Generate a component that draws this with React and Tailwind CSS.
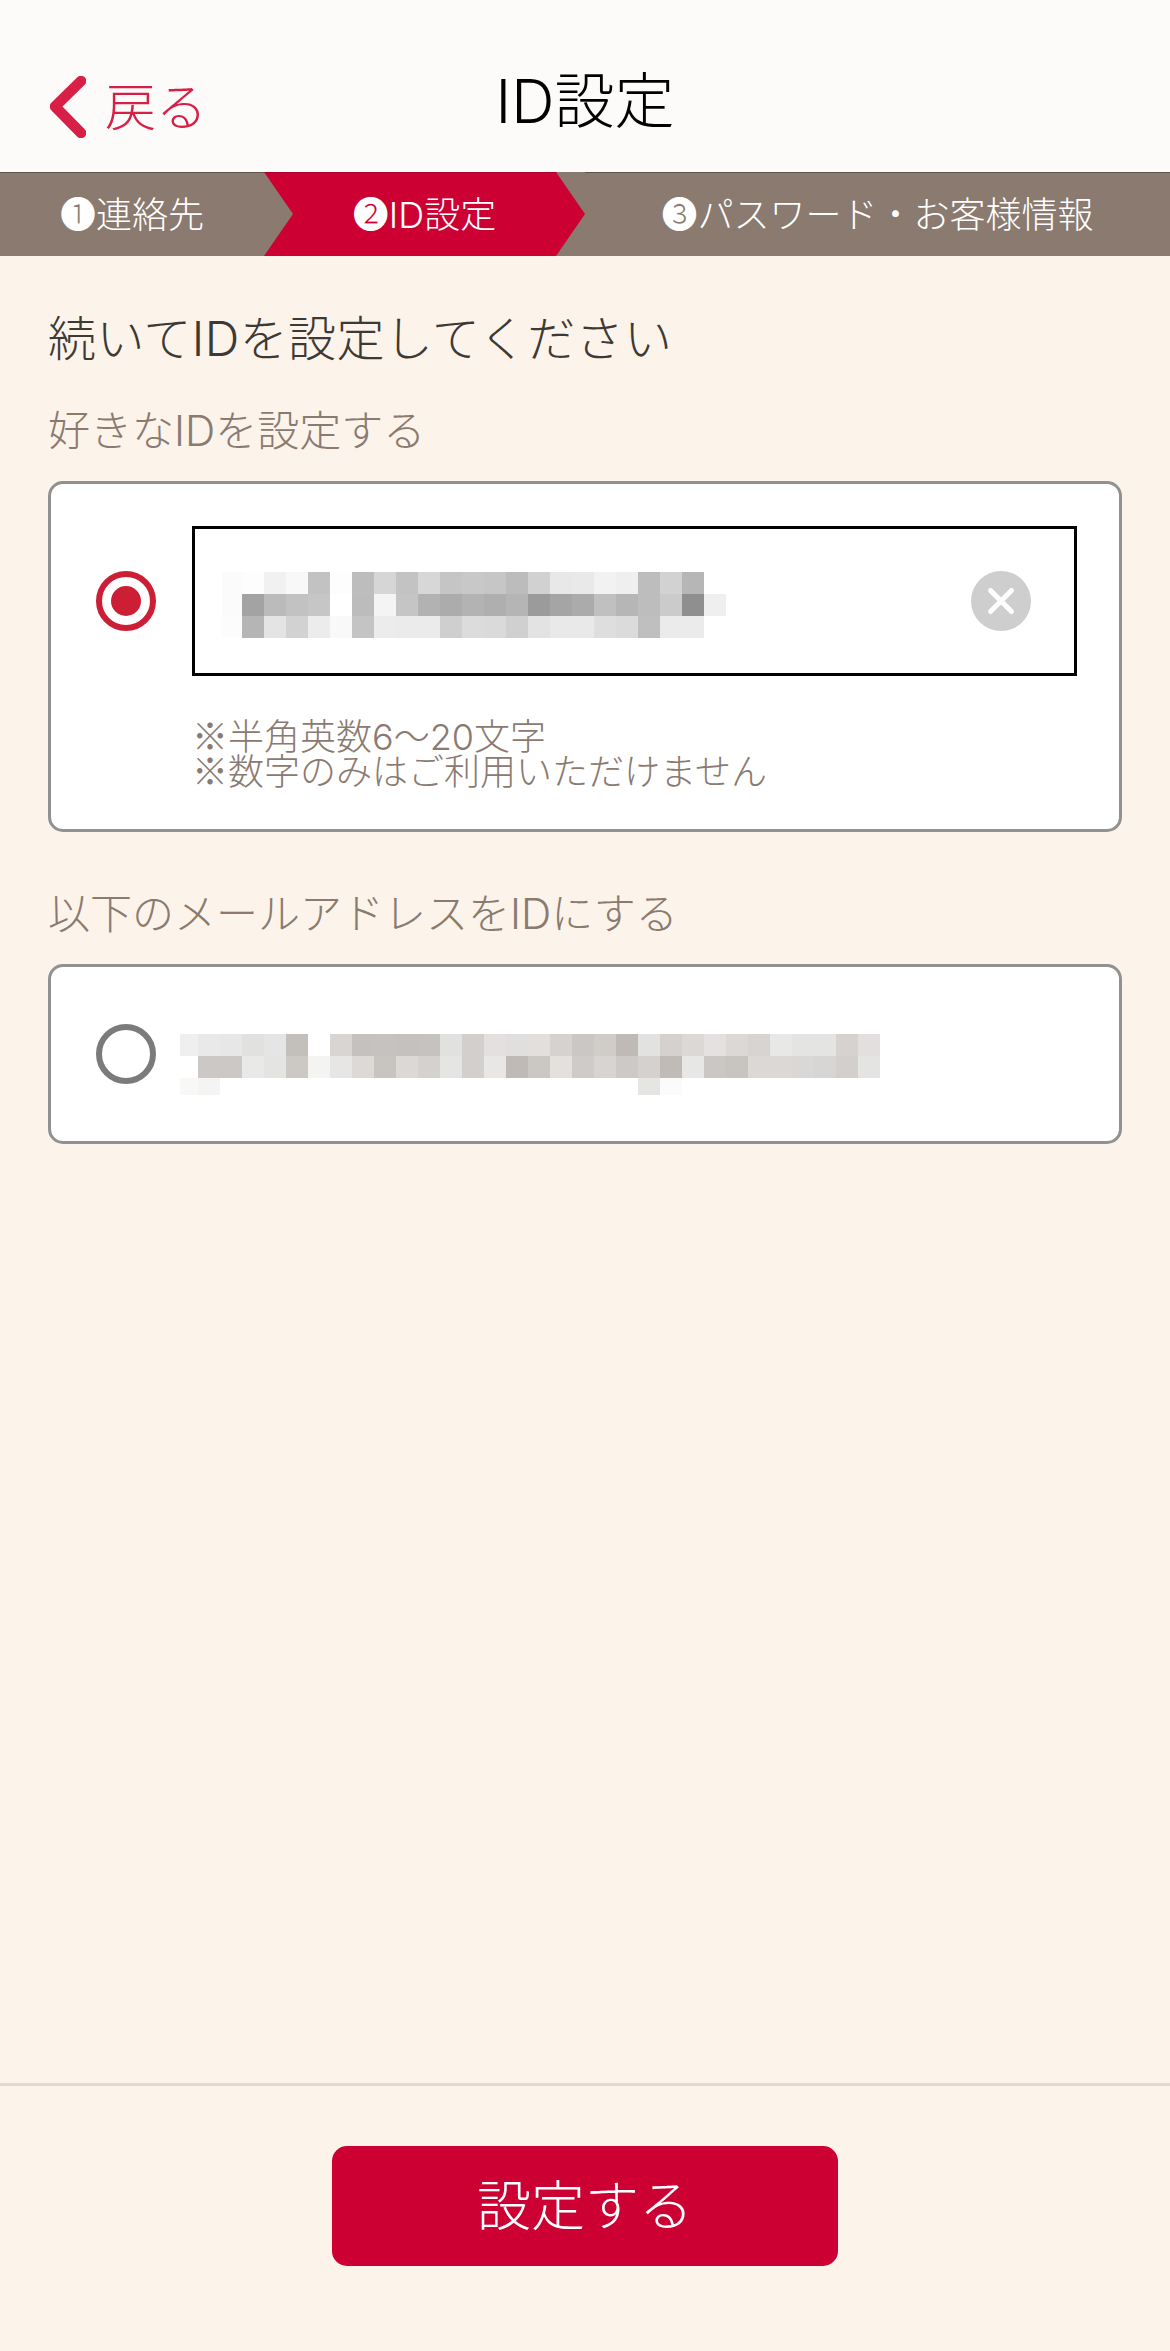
import React from 'react';

const FONT = "font-['Inter','Noto_Sans_CJK_JP',sans-serif]";
const MARK = "font-['Noto_Sans_CJK_JP',sans-serif]";

// pixelated (blurred out) user id in the input
const idMosaic = [
  ['#fbfbfb', '#fdfdfd', '#f1f1f1', '#f8f8f8', '#c2c2c2', '#fdfdfd', '#bdbdbd', '#d6d6d6', '#c3c3c3', '#d7d7d7', '#c5c5c5', '#c8c8c8', '#c6c6c6', '#bcbcbc', '#d1d1d1', '#e8e8e8', '#e9e9e9', '#f2f2f2', '#efefef', '#bdbdbd', '#d2d2d2', '#b6b6b6'],
  ['#fbfbfb', '#a3a3a3', '#bbbbbb', '#c2c2c2', '#c6c6c6', '#ffffff', '#bcbcbc', '#f4f4f4', '#c5c5c5', '#b2b2b2', '#acacac', '#b3b3b3', '#afafaf', '#b5b5b5', '#9b9b9b', '#a5a5a5', '#ababab', '#c0c0c0', '#b6b6b6', '#bdbdbd', '#cbcbcb', '#8f8f8f', '#efefef'],
  ['#fcfcfc', '#b5b5b5', '#e4e4e4', '#d2d2d2', '#ececec', '#f9f9f9', '#c4c4c4', '#ececec', '#ebebeb', '#ebebeb', '#cfcfcf', '#dcdcdc', '#dadada', '#d0d0d0', '#e3e3e3', '#e9e9e9', '#e9e9e9', '#dedede', '#dbdbdb', '#bfbfbf', '#ebebeb', '#ebebeb'],
];

// pixelated mail address
const mailMosaic = [
  ['#efefef', '#e9e9e9', '#e7e7e7', '#e1e1e0', '#e5e5e5', '#c3bfbb', '#ffffff', '#d8d5d2', '#c5c1be', '#c6c2bf', '#c5c1be', '#c6c2bf', '#e1e1df', '#d3cfcc', '#e3e0df', '#e0dfdd', '#e2dfdd', '#d5d2cf', '#cbc7c4', '#d0ccc8', '#bfbab6', '#e2e2e0', '#d4d1ce', '#dbd8d6', '#e4e1e0', '#dbd8d6', '#d7d4d1', '#e8e8e6', '#e4e4e2', '#e4e4e2', '#d5d2cf', '#e2dfde'],
  ['#ffffff', '#ccc8c5', '#ccc8c5', '#e9e9e7', '#e4e4e3', '#ccc9c5', '#f4f5f3', '#e7e6e4', '#dcd9d7', '#c8c5c1', '#dbd8d5', '#d5d1ce', '#e5e5e3', '#d3cfcc', '#e8e7e6', '#bfbab6', '#cbc7c3', '#e3e0de', '#cfcbc8', '#d7d4d1', '#cdc9c6', '#d4d1ce', '#c0bbb7', '#e7e7e5', '#cbc7c4', '#c8c4c0', '#dbd8d6', '#dbd8d6', '#dad8d6', '#d8d6d4', '#d3cfcc', '#e4e4e3'],
  ['#f8f8f7', '#f4f4f3', null, null, null, null, null, null, null, null, null, null, null, null, null, null, null, null, null, null, null, '#e5e5e4', '#fbfbfb'],
];

const Mosaic = ({ rows, firstWidth, rowHeights, width, className }) => {
  let y = 0;
  return (
    <svg width={width} height={rowHeights.reduce((a, b) => a + b, 0)} className={className} shapeRendering="crispEdges">
      {rows.map((row, r) => {
        const top = y;
        y += rowHeights[r];
        return row.map((color, c) =>
          color ? (
            <rect
              key={`${r}-${c}`}
              x={c === 0 ? 0 : firstWidth + (c - 1) * 22}
              y={top}
              width={c === 0 ? firstWidth : 22}
              height={rowHeights[r]}
              fill={color}
            />
          ) : null
        );
      })}
    </svg>
  );
};

const Radio = ({ checked }) => (
  <span
    className={`flex h-[60px] w-[60px] shrink-0 items-center justify-center rounded-full border-[6px] bg-white ${
      checked ? 'border-[#cc1f36]' : 'border-[#7b7b7b]'
    }`}
  >
    {checked && <span className="h-[30px] w-[30px] rounded-full bg-[#cc1f36]" />}
  </span>
);

const App = () => {
  return (
    <div className={`flex h-[2351px] w-full flex-col bg-[#fcf3ea] font-light ${FONT}`}>
      {/* header */}
      <header className="relative flex h-[172px] items-center justify-center bg-[#fcfbf9] pt-[30px]">
        <button className="absolute left-[50px] top-[76px] flex items-center text-[#d81f45]">
          <svg width="36" height="62" viewBox="0 0 36 62" fill="none">
            <path d="M31 5 L5 30.5 L31 57" stroke="#d81f45" strokeWidth="10.5" strokeLinecap="round" strokeLinejoin="round" />
          </svg>
          <span className="ml-[19px] mt-[1px] text-[51px] leading-[60px]">戻る</span>
        </button>
        <h1 className="text-[60px] leading-none text-black">ID設定</h1>
      </header>

      {/* steps */}
      <div className="flex h-[84px] bg-[#8a7a70] text-[36px] text-white">
        <div className="flex w-[264px] items-center justify-center border-t-[1px] border-[#5f544e]">❶連絡先</div>
        <div className="flex w-[321px] items-center justify-center border-t-[1px] border-[#a80030] bg-[#cc0033] [clip-path:polygon(0_0,calc(100%-29px)_0,100%_50%,calc(100%-29px)_100%,0_100%,29px_50%)]">
          ❷ID設定
        </div>
        <div className="flex flex-1 items-center justify-center border-t-[1px] border-[#5f544e]">❸パスワード・お客様情報</div>
      </div>

      {/* form */}
      <main className="flex-1 px-[48px] pt-[47px]">
        <h2 className="text-[48px] leading-[72px] tracking-[0.4px] text-[#3d3935]">続いてIDを設定してください</h2>

        <p className="mt-[26px] h-[60px] text-[42px] leading-[60px] text-[#8a7a70]">好きなIDを設定する</p>
        <div className="mt-[20px] h-[351px] rounded-[15px] border-[3px] border-[#919191] bg-white pl-[45px] pr-[42px] pt-[42px]">
          <div className="flex items-center gap-[36px]">
            <Radio checked />
            <div className="flex h-[150px] flex-1 items-center justify-between border-[3px] border-black pl-[27px] pr-[43px]">
              <Mosaic
                rows={idMosaic}
                firstWidth={20}
                rowHeights={[22, 22, 22]}
                width={504}
                className="mt-[8px]"
              />
              <span className="flex h-[60px] w-[60px] items-center justify-center rounded-full bg-[#cecece]">
                <svg width="30" height="30" viewBox="0 0 30 30" fill="none">
                  <path d="M4.5 4.5 L25.5 25.5 M25.5 4.5 L4.5 25.5" stroke="#fff" strokeWidth="5" strokeLinecap="round" />
                </svg>
              </span>
            </div>
          </div>
          <div className="ml-[96px] mt-[40px] text-[36px] leading-[36px] text-[#8a7a70]">
            <p className="h-[35px]"><span className={MARK}>※</span>半角英数6〜20文字</p>
            <p className="h-[35px]"><span className={MARK}>※</span>数字のみはご利用いただけません</p>
          </div>
        </div>

        <p className="mt-[52px] h-[60px] text-[42px] leading-[60px] text-[#8a7a70]">以下のメールアドレスをIDにする</p>
        <div className="mt-[20px] flex h-[180px] items-center rounded-[15px] border-[3px] border-[#919191] bg-white pl-[45px]">
          <Radio />
          <Mosaic
            rows={mailMosaic}
            firstWidth={18}
            rowHeights={[22, 22, 17]}
            width={700}
            className="ml-[24px] mt-[21px]"
          />
        </div>
      </main>

      {/* footer button */}
      <footer className="flex h-[268px] justify-center border-t-[3px] border-[#e2d9cd] pt-[60px]">
        <button className="h-[120px] w-[506px] rounded-[15px] bg-[#cc0033] text-[54px] font-light text-white">設定する</button>
      </footer>
    </div>
  );
};

export default App;
